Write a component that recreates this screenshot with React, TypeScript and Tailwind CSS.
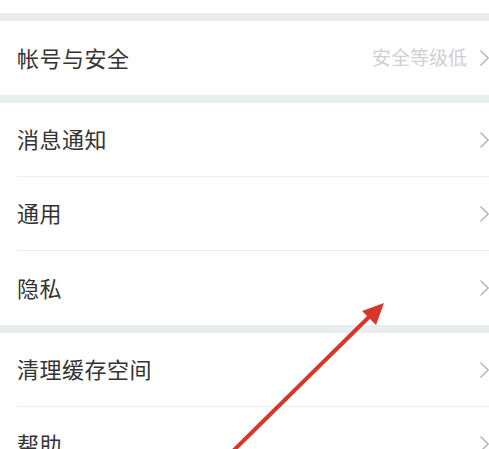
import React from 'react';

interface Row {
  label: string;
  extra?: string;
}

const groups: Row[][] = [
  [{ label: '帐号与安全', extra: '安全等级低' }],
  [{ label: '消息通知' }, { label: '通用' }, { label: '隐私' }],
  [{ label: '清理缓存空间' }, { label: '帮助' }],
];

const Chevron = () => (
  <svg width="11" height="18" viewBox="0 0 11 18" className="shrink-0">
    <path d="M1.5 1.5 L9 9 L1.5 16.5" fill="none" stroke="#b9b9b9" strokeWidth="1.6" />
  </svg>
);

const SettingRow: React.FC<{ row: Row; last: boolean }> = ({ row, last }) => (
  <div className="pl-[17px] bg-white">
    <div className={`h-[74px] flex items-center ${last ? '' : 'border-b border-[#eceeef]'}`}>
      <span className="text-[22px] leading-none pb-[3px] text-[#333333] tracking-[0.5px] flex-1">{row.label}</span>
      {row.extra && <span className="text-[19px] leading-none pb-[3px] text-[#cfcfd4] mr-[12px]">{row.extra}</span>}
      <div className="w-[11px] mr-[-1px] flex justify-end">
        <Chevron />
      </div>
    </div>
  </div>
);

export default function App() {
  return (
    <div
      className="relative w-[489px] h-[449px] overflow-hidden bg-white"
      style={{ fontFamily: '"Noto Sans CJK SC", "Noto Sans", sans-serif' }}
    >
      <div className="h-[13px] bg-white" />
      {groups.map((g, gi) => (
        <div key={gi}>
          <div className="h-[8px] bg-[#e8edf0]" />
          {g.map((row, ri) => (
            <SettingRow key={ri} row={row} last={ri === g.length - 1} />
          ))}
        </div>
      ))}
      <svg className="absolute left-0 top-0" width="489" height="449" viewBox="0 0 489 449">
        <line x1="232" y1="452" x2="372" y2="314" stroke="#d8362a" strokeWidth="4" strokeLinecap="round" />
        <polygon points="384,303 362,311 376,325" fill="#d8362a" />
      </svg>
    </div>
  );
}
